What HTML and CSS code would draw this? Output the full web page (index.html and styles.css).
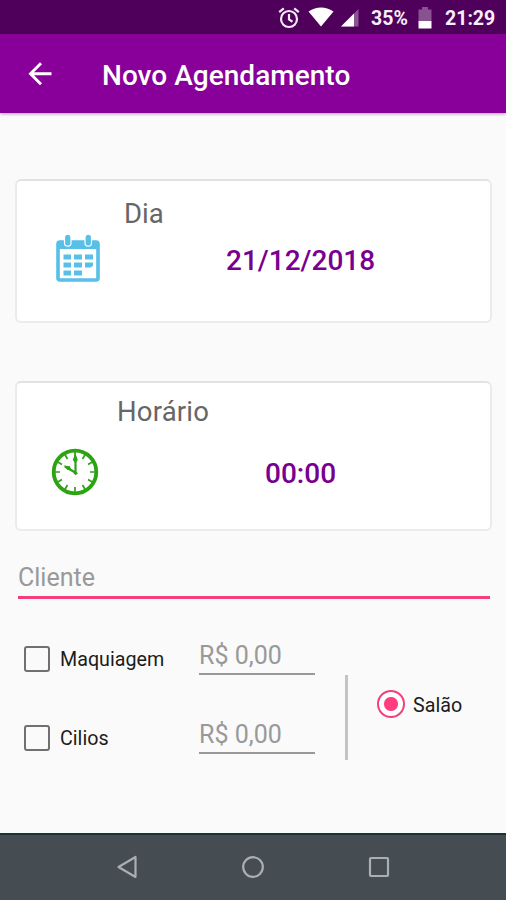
FILE: index.html
```html
<!DOCTYPE html>
<html lang="pt-BR">
<head>
  <meta charset="UTF-8" />
  <title>Novo Agendamento</title>
  <link rel="stylesheet" href="styles.css">
</head>
<body>

<div class="screen">
  <div class="status-bar">
    <svg class="alarm" width="22" height="22" viewBox="0 0 22 22" fill="none" stroke="#f3eaf5" stroke-width="2.2">
      <circle cx="11" cy="12" r="8" />
      <path d="M11 7v5.5l3.5 2.2M1.2 5.2l4.6-3.9M20.8 5.2l-4.6-3.9" />
    </svg>
    <svg class="wifi" width="26" height="20" viewBox="0 0 26 20">
      <path d="M.5 4.5Q13-3.5 25.5 4.5L13 19.5z" fill="#fff" />
    </svg>
    <svg class="signal" width="18" height="18" viewBox="0 0 18 18">
      <path d="M0 17.5L17.5 0v17.5z" fill="#8a5592" />
      <path d="M0 17.5L13 4.5v13z" fill="#fff" />
    </svg>
    <span class="percent">35%</span>
    <svg class="battery" width="14" height="22" viewBox="0 0 14 22">
      <path d="M4 0h6v2.5h3.5V14H.5V2.500H4z" fill="#87528f" />
      <path d="M.5 14h13v7.5H.5z" fill="#fff" />
    </svg>
    <span class="time">21:29</span>
  </div>

  <div class="app-bar">
    <svg class="back" width="24" height="24" viewBox="0 0 24 24" fill="none" stroke="#fff" stroke-width="2.9">
      <path d="M23.5 11.700H3M13 1.200L2.500 11.700 13 22.200" />
    </svg>
    <h1>Novo Agendamento</h1>
  </div>

  <div class="content">
    <div class="card day">
      <div class="card-label">Dia</div>
      <div class="card-row">
        <svg width="46" height="48" viewBox="0 0 46 48">
          <rect x="3" y="8" width="40" height="38" rx="2" fill="#fff" stroke="#58bfe6" stroke-width="3.6" />
          <path d="M2 7h42v8H2z" fill="#58bfe6" />
          <g fill="#58bfe6" stroke="#fff" stroke-width="1.2">
            <rect x="9.5" y=".2" width="6.5" height="12" rx="3.2" />
            <rect x="30" y=".2" width="6.5" height="12" rx="3.2" />
          </g>
          <path d="M8.500 20.500H16v5H8.500zM19 20.500h8v5h-8zM30 20.500h8v5h-8zM8.500 28.500H16v5H8.500zM19 28.500h8v5h-8zM30 28.500h8v3l-2 2h-6zM8.500 36.500H16v5H8.500zM19 36.500h8v5h-8z" fill="#58bfe6" />
        </svg>
        <span class="value">21/12/2018</span>
      </div>
    </div>

    <div class="card hour">
      <div class="card-label">Horário</div>
      <div class="card-row">
        <svg width="48" height="48" viewBox="0 0 48 48" fill="none" stroke="#2ba313">
          <circle cx="24" cy="24" r="21.3" stroke-width="3.8" />
          <g stroke-width="1.7">
            <path d="M24 39v5M4 24h5M39 24h5M34 6.700l-2.500 4.300M41.300 14L37 16.500M41.300 34L37 31.500M34 41.300L31.500 37M14 41.300l2.500-4.300M6.700 34l4.300-2.500M6.700 14l4.300 2.500M14 6.700l2.500 4.300M24 4v5" />
          </g>
          <path d="M24.500 25V9M25 25l-11-6.500" stroke-width="2.2" />
          <path d="M24.300 5l2.500 7-2.500 3-2.500-3zM12.500 17.500l6.500.8 1 3.200-3.500.4zM24.500 23.200l2.500 2-2.500 2-2-2z" fill="#2ba313" stroke="none" />
        </svg>
        <span class="value">00:00</span>
      </div>
    </div>

    <div class="field client"><span>Cliente</span></div>

    <div class="services">
      <div class="service-list">
        <div class="service">
          <span class="checkbox"></span>
          <span class="name">Maquiagem</span>
          <div class="field price"><span>R$ 0,00</span></div>
        </div>
        <div class="service">
          <span class="checkbox"></span>
          <span class="name">Cilios</span>
          <div class="field price"><span>R$ 0,00</span></div>
        </div>
      </div>
      <div class="divider"></div>
      <div class="place">
        <span class="radio"></span>
        <span class="name">Salão</span>
      </div>
    </div>
  </div>

  <div class="nav-bar">
    <svg width="22" height="24" viewBox="0 0 22 24" fill="none" stroke="#a9afb2" stroke-width="2.2" stroke-linejoin="round">
      <path d="M19.500 2v20L2.500 12z" />
    </svg>
    <svg width="24" height="24" viewBox="0 0 24 24" fill="none" stroke="#a9afb2" stroke-width="2.2">
      <circle cx="12" cy="12" r="9.8" />
    </svg>
    <svg width="22" height="22" viewBox="0 0 22 22" fill="none" stroke="#a9afb2" stroke-width="2.2">
      <rect x="2" y="2" width="18" height="18" rx="1" />
    </svg>
  </div>
</div>

</body>
</html>
```

FILE: styles.css
```css
* {
  box-sizing: border-box;
}

body {
  margin: 0;
  font-family: Roboto, sans-serif;
  background: #fafafa;
}

svg {
  display: block;
  flex: none;
}

.screen {
  width: 506px;
  height: 900px;
  display: flex;
  flex-direction: column;
  overflow: hidden;
}

/* Barra de status */
.status-bar {
  height: 34px;
  flex: none;
  display: flex;
  align-items: center;
  justify-content: flex-end;
  padding: 2px 11px 0 0;
  background: #4e005a;
  color: #f8effa;
  font-size: 19.5px;
  font-weight: 700;
}

.wifi {
  margin: 0 0 2px 8px;
}

.signal {
  margin-left: 7px;
}

.percent {
  width: 37px;
  margin-left: 12px;
}

.battery {
  margin-left: 10px;
}

.time {
  width: 50px;
  margin-left: 13px;
}

/* Barra do app */
.app-bar {
  height: 79px;
  flex: none;
  display: flex;
  align-items: center;
  padding-left: 28px;
  background: #880099;
  box-shadow: 0 1px 3px rgba(0,0,0,0.35);
}

.app-bar h1 {
  margin: 3px 0 0 50px;
  color: #fff;
  font-size: 28px;
  font-weight: 500;
  letter-spacing: 0.03px;
  white-space: nowrap;
}

.content {
  flex: 1;
  padding: 66px 14px 0 15px;
}

.card {
  border: 2px solid #ebebeb;
  border-top-color: #e2e2e2;
  border-radius: 6px;
  background: #fff;
}

.day {
  height: 144px;
  padding: 16px 0 0 38px;
}

.hour {
  height: 150px;
  margin-top: 58px;
  padding: 12px 0 0 34px;
}

.card-label {
  color: #666;
  font-size: 27.5px;
  line-height: 34px;
}

.day .card-label {
  padding-left: 69px;
}

.hour .card-label {
  padding-left: 66px;
  letter-spacing: 0.2px;
}

.card-row {
  display: flex;
  align-items: center;
}

.day .card-row {
  margin-top: 3px;
}

.hour .card-row {
  margin-top: 19px;
}

.value {
  padding-top: 2px;
  color: #780090;
  font-size: 28px;
  font-weight: 500;
}

.day .value {
  margin-left: 125px;
  padding-top: 4px;
}

.hour .value {
  margin-left: 166px;
}

/* Campos de texto */
.field {
  color: #999;
  font-size: 25px;
  line-height: 34px;
}

.client {
  height: 38px;
  margin: 30px 2px 0 3px;
  border-bottom: 3px solid #f43f7f;
}

.services {
  display: flex;
  margin-top: 40px;
  padding-left: 9px;
}

.service {
  display: flex;
  height: 79px;
}

.checkbox {
  width: 26px;
  height: 26px;
  margin-top: 7px;
  border: 2px solid #707070;
  border-radius: 3px;
}

.name {
  color: #1c1c1c;
  font-size: 19.7px;
  line-height: 24px;
}

.service .name {
  width: 139px;
  margin: 9px 0 0 10px;
}

.price {
  width: 116px;
  height: 36px;
  border-bottom: 2px solid #999;
}

.divider {
  width: 3px;
  height: 85px;
  margin: 36px 0 0 30px;
  background: #c3c3c3;
}

.place {
  display: flex;
  margin: 51px 0 0 29px;
}

.radio {
  width: 28px;
  height: 28px;
  border: 2.5px solid #f43f7f;
  border-radius: 50%;
  background: radial-gradient(circle, #ff3d7f 6.5px, #fff 7.5px);
}

.place .name {
  margin: 4px 0 0 8px;
}

/* Barra de navegação */
.nav-bar {
  height: 67px;
  flex: none;
  display: flex;
  align-items: center;
  justify-content: center;
  gap: 103px;
  padding-bottom: 2px;
  border-top: 2px solid #1c3333;
  background: #454d52;
}
```
